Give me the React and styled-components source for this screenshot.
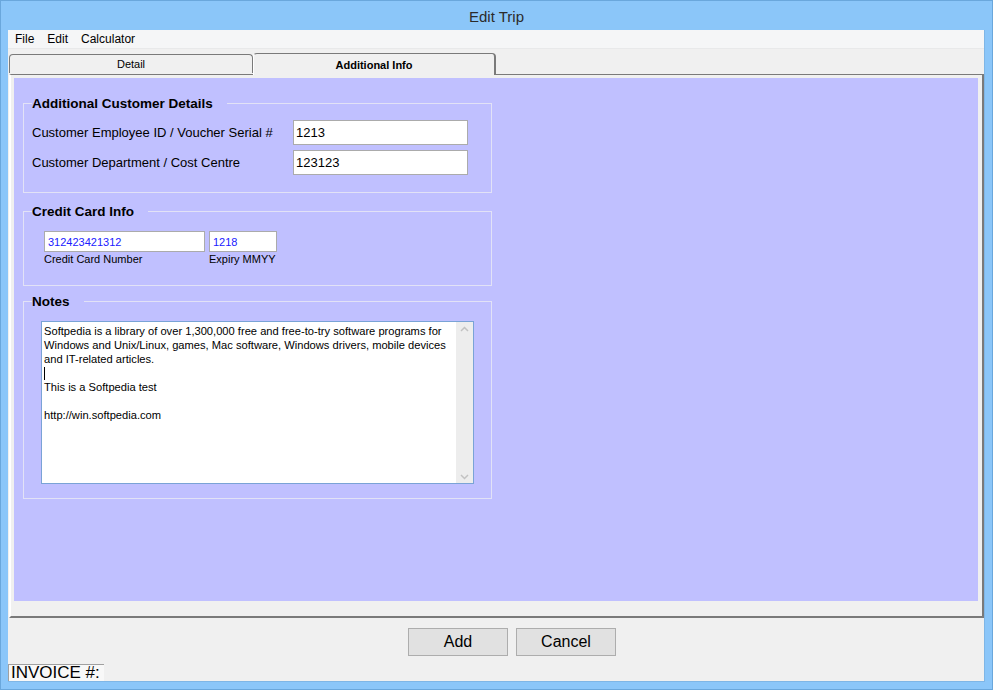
import React from 'react';
import styled, { createGlobalStyle } from 'styled-components';

const GlobalStyle = createGlobalStyle`
  html, body {
    margin: 0;
    padding: 0;
    background: #8bc6f9;
  }
  body {
    font-family: 'Liberation Sans', Arial, sans-serif;
  }
`;

const Window = styled.div`
  width: 993px;
  height: 690px;
  box-sizing: border-box;
  background: #8bc6f9;
  border: 1px solid #6aa7dc;
  display: flex;
  flex-direction: column;
  padding: 0 7px 7px 7px;
`;

const TitleBar = styled.div`
  height: 30px;
  display: flex;
  align-items: center;
  justify-content: center;
  font-family: 'Liberation Sans', sans-serif;
  font-size: 15px;
  color: #2b2b2b;
  padding-top: 1px;
`;

const Client = styled.div`
  flex: 1;
  background: #f0f0f0;
  display: flex;
  flex-direction: column;
  border-right: 1px solid #7fb6e6;
  border-bottom: 1px solid #7fb6e6;
`;

const MenuBar = styled.div`
  height: 18px;
  background: #f5f6f7;
  display: flex;
  align-items: center;
  padding-left: 7px;
  font-size: 12px;
  color: #000;
  border-bottom: 1px solid #e8e9ea;
`;

const MenuItem = styled.span`
  margin-right: 13px;
`;

const TabStrip = styled.div`
  display: flex;
  padding: 4px 0 0 1px;
  height: 21px;
  position: relative;
  z-index: 1;
`;

const Tab = styled.div`
  width: ${p => (p.$active ? '243px' : '244px')};
  height: ${p => (p.$active ? '22px' : '19px')};
  margin-top: ${p => (p.$active ? '0' : '1px')};
  box-sizing: border-box;
  background: #f0f0f0;
  border-top: 1px solid #7a7a7a;
  border-left: 1px solid ${p => (p.$active ? '#ffffff' : '#7a7a7a')};
  border-right: ${p => (p.$active ? '2px solid #7a7a7a' : '1px solid #7a7a7a')};
  border-top-left-radius: 4px;
  border-top-right-radius: 4px;
  display: flex;
  align-items: center;
  justify-content: center;
  font-size: 11px;
  font-weight: ${p => (p.$active ? 'bold' : 'normal')};
  color: #000;
  padding-top: ${p => (p.$active ? '1px' : '0')};
`;

const Panel = styled.div`
  margin-left: 1px;
  width: 975px;
  height: 544px;
  box-sizing: border-box;
  border-top: 1px solid #7a7a7a;
  border-left: 2px solid #ffffff;
  border-right: 2px solid #7a7a7a;
  border-bottom: 2px solid #7a7a7a;
  background: #f0f0f0;
  padding: 3px 4px 15px 3px;
  display: flex;
`;

const Purple = styled.div`
  flex: 1;
  background: #c0c0ff;
  padding: 18px 9px 0 9px;
  display: flex;
  flex-direction: column;
`;

const Group = styled.fieldset`
  width: 469px;
  box-sizing: border-box;
  margin: ${p => p.$gap || 0}px 0 0 0;
  border: 1px solid #e2e2f6;
  padding: 0;
  min-width: 0;
`;

const Legend = styled.legend`
  font-size: 13.5px;
  font-weight: bold;
  color: #000;
  padding: 0 14px 0 0;
  margin-left: 8px;
  line-height: 14px;
  position: relative;
  top: 1px;
`;

const GroupBody = styled.div`
  padding: ${p => p.$pad};
`;

const FieldRow = styled.div`
  display: flex;
  align-items: center;
  height: 25px;
  margin-bottom: 5px;
`;

const FieldLabel = styled.div`
  width: 261px;
  font-size: 13px;
  color: #000;
`;

const TextBox = styled.div`
  width: 175px;
  height: 25px;
  box-sizing: border-box;
  background: #fff;
  border: 1px solid #ababab;
  font-size: 13px;
  color: #000;
  display: flex;
  align-items: center;
  padding-left: 2px;
`;

const CardRow = styled.div`
  display: flex;
  gap: 4px;
`;

const CardField = styled.div`
  display: flex;
  flex-direction: column;
`;

const CardInput = styled.div`
  width: ${p => p.$w}px;
  height: 21px;
  box-sizing: border-box;
  background: #fff;
  border: 1px solid #ababab;
  font-size: 11px;
  color: #2020ff;
  display: flex;
  align-items: center;
  padding-left: 3px;
`;

const CardLabel = styled.div`
  font-size: 11px;
  color: #000;
  margin-top: 1px;
`;

const NotesBox = styled.div`
  width: 433px;
  height: 163px;
  box-sizing: border-box;
  background: #fff;
  border: 1px solid #7aa3d6;
  display: flex;
`;

const NotesText = styled.div`
  flex: 1;
  padding: 2px 0 0 2px;
  font-size: 11.15px;
  line-height: 14px;
  color: #000;
  white-space: pre;
`;

const Caret = styled.span`
  display: inline-block;
  width: 1px;
  height: 13px;
  background: #000;
  vertical-align: top;
  margin-top: 1px;
`;

const ScrollBar = styled.div`
  width: 17px;
  background: #ededed;
  display: flex;
  flex-direction: column;
  justify-content: space-between;
  align-items: center;
  padding: 4px 0 3px;
`;

const Footer = styled.div`
  height: 46px;
  display: flex;
  justify-content: center;
  align-items: flex-start;
  padding: 10px 0 0 32px;
  box-sizing: border-box;
  gap: 8px;
`;

const Button = styled.div`
  width: 100px;
  height: 28px;
  box-sizing: border-box;
  background: #e1e1e1;
  border: 1px solid #adadad;
  display: flex;
  align-items: center;
  justify-content: center;
  font-size: 16px;
  color: #000;
`;

const StatusBar = styled.div`
  display: flex;
`;

const StatusCell = styled.div`
  width: 96px;
  height: 17px;
  box-sizing: border-box;
  background: #f8f8f8;
  border-left: 1px solid #a0a0a0;
  border-top: 1px solid #a0a0a0;
  font-size: 17px;
  line-height: 16px;
  color: #000;
  padding-left: 2px;
  white-space: nowrap;
  overflow: hidden;
`;

const Chevron = ({ up }) => (
  <svg width="9" height="6" viewBox="0 0 9 6">
    <path
      d={up ? 'M1 5 L4.5 1.5 L8 5' : 'M1 1 L4.5 4.5 L8 1'}
      fill="none"
      stroke="#c2c2c2"
      strokeWidth="1.5"
    />
  </svg>
);

export default function App() {
  return (
    <>
      <GlobalStyle />
      <Window>
        <TitleBar>Edit Trip</TitleBar>
        <Client>
          <MenuBar>
            <MenuItem>File</MenuItem>
            <MenuItem>Edit</MenuItem>
            <MenuItem>Calculator</MenuItem>
          </MenuBar>
          <TabStrip>
            <Tab>Detail</Tab>
            <Tab $active>Additional Info</Tab>
          </TabStrip>
          <Panel>
            <Purple>
              <Group>
                <Legend>Additional Customer Details</Legend>
                <GroupBody $pad="10px 0 12px 8px">
                  <FieldRow>
                    <FieldLabel>Customer Employee ID / Voucher Serial #</FieldLabel>
                    <TextBox>1213</TextBox>
                  </FieldRow>
                  <FieldRow>
                    <FieldLabel>Customer Department / Cost Centre</FieldLabel>
                    <TextBox>123123</TextBox>
                  </FieldRow>
                </GroupBody>
              </Group>
              <Group $gap={11}>
                <Legend>Credit Card Info</Legend>
                <GroupBody $pad="13px 0 20px 20px">
                  <CardRow>
                    <CardField>
                      <CardInput $w={161}>312423421312</CardInput>
                      <CardLabel>Credit Card Number</CardLabel>
                    </CardField>
                    <CardField>
                      <CardInput $w={68}>1218</CardInput>
                      <CardLabel>Expiry MMYY</CardLabel>
                    </CardField>
                  </CardRow>
                </GroupBody>
              </Group>
              <Group $gap={8}>
                <Legend>Notes</Legend>
                <GroupBody $pad="13px 0 14px 17px">
                  <NotesBox>
                    <NotesText>
                      {'Softpedia is a library of over 1,300,000 free and free-to-try software programs for\n'}
                      {'Windows and Unix/Linux, games, Mac software, Windows drivers, mobile devices\n'}
                      {'and IT-related articles.\n'}
                      <Caret />
                      {'\nThis is a Softpedia test\n\nhttp://win.softpedia.com'}
                    </NotesText>
                    <ScrollBar>
                      <Chevron up />
                      <Chevron />
                    </ScrollBar>
                  </NotesBox>
                </GroupBody>
              </Group>
            </Purple>
          </Panel>
          <Footer>
            <Button>Add</Button>
            <Button>Cancel</Button>
          </Footer>
          <StatusBar>
            <StatusCell>INVOICE #:</StatusCell>
          </StatusBar>
        </Client>
      </Window>
    </>
  );
}
